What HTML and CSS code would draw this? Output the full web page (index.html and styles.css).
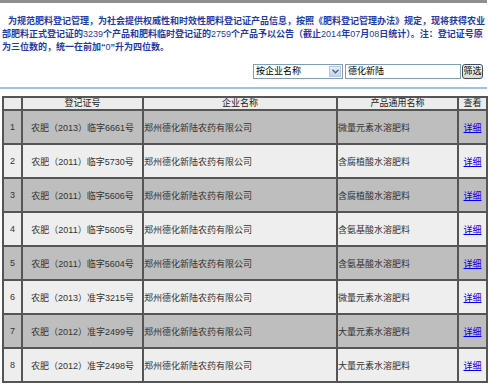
FILE: index.html
```html
<!DOCTYPE html>
<html lang="zh-CN">
<head>
<meta charset="utf-8">
<title>肥料登记证查询</title>
<link rel="stylesheet" href="styles.css">
</head>
<body>
<div class="page">
  <div class="topbar"></div>
  <p class="notice"><span class="l1">为规范肥料登记管理，为社会提供权威性和时效性肥料登记证产品信息，按照《肥料登记管理办法》规定，现将获得农业</span><br>部肥料正式登记证的<span class="num">3239</span>个产品和肥料临时登记证的<span class="num">2759</span>个产品予以公告（截止<span class="num">2014</span>年<span class="num">07</span>月<span class="num">08</span>日统计）。注：登记证号原<br>为三位数的，统一在前加“<span class="num">0</span>”升为四位数。</p>
  <div class="filter">
    <div class="select"><span class="select-text">按企业名称</span><span class="select-btn"><svg width="7" height="5" viewBox="0 0 7 5"><path d="M0.5 0.8 L3.5 3.8 L6.5 0.8" fill="none" stroke="#4d6185" stroke-width="1.4"/></svg></span></div>
    <div class="input">德化新陆</div>
    <div class="btn">筛选</div>
  </div>
  <div class="divider"></div>
  <table class="list">
    <colgroup><col class="c1"><col class="c2"><col class="c3"><col class="c4"><col class="c5"></colgroup>
    <thead>
      <tr><th></th><th>登记证号</th><th>企业名称</th><th>产品通用名称</th><th>查看</th></tr>
    </thead>
    <tbody>
      <tr class="odd"><td class="n">1</td><td class="cert">农肥（2013）临字6661号</td><td class="l">郑州德化新陆农药有限公司</td><td class="l">微量元素水溶肥料</td><td class="v"><a href="#">详细</a></td></tr>
      <tr class="even"><td class="n">2</td><td class="cert">农肥（2011）临字5730号</td><td class="l">郑州德化新陆农药有限公司</td><td class="l">含腐植酸水溶肥料</td><td class="v"><a href="#">详细</a></td></tr>
      <tr class="odd"><td class="n">3</td><td class="cert">农肥（2011）临字5606号</td><td class="l">郑州德化新陆农药有限公司</td><td class="l">含腐植酸水溶肥料</td><td class="v"><a href="#">详细</a></td></tr>
      <tr class="even"><td class="n">4</td><td class="cert">农肥（2011）临字5605号</td><td class="l">郑州德化新陆农药有限公司</td><td class="l">含氨基酸水溶肥料</td><td class="v"><a href="#">详细</a></td></tr>
      <tr class="odd"><td class="n">5</td><td class="cert">农肥（2011）临字5604号</td><td class="l">郑州德化新陆农药有限公司</td><td class="l">含氨基酸水溶肥料</td><td class="v"><a href="#">详细</a></td></tr>
      <tr class="even"><td class="n">6</td><td class="cert">农肥（2013）准字3215号</td><td class="l">郑州德化新陆农药有限公司</td><td class="l">微量元素水溶肥料</td><td class="v"><a href="#">详细</a></td></tr>
      <tr class="odd"><td class="n">7</td><td class="cert">农肥（2012）准字2499号</td><td class="l">郑州德化新陆农药有限公司</td><td class="l">大量元素水溶肥料</td><td class="v"><a href="#">详细</a></td></tr>
      <tr class="even"><td class="n">8</td><td class="cert">农肥（2012）准字2498号</td><td class="l">郑州德化新陆农药有限公司</td><td class="l">大量元素水溶肥料</td><td class="v"><a href="#">详细</a></td></tr>
    </tbody>
  </table>
</div>
</body>
</html>
```
FILE: styles.css
```css
html, body {
  margin: 0;
  padding: 0;
  background: #ffffff;
}
body {
  font-family: "Liberation Sans", "Noto Sans CJK SC", sans-serif;
  font-size: 9px;
  color: #333333;
}
.page {
  width: 487px;
}
.topbar {
  height: 3px;
  background: #8f8f8f;
}
.notice {
  margin: 12px 0 0 0;
  padding-left: 2px;
  line-height: 13px;
  white-space: nowrap;
  color: #1f3aa8;
  font-weight: bold;
}
.notice .l1 {
  padding-left: 6px;
}
.notice .num {
  font-weight: normal;
}
.filter {
  margin-top: 10px;
  height: 15px;
  display: flex;
  justify-content: flex-end;
  padding-right: 4px;
  gap: 1px;
}
.select {
  width: 88px;
  height: 13px;
  border: 1px solid #7f9db9;
  background: #fff;
  display: flex;
  align-items: center;
  margin-right: 1px;
}
.select-text {
  flex: 1;
  padding-left: 2px;
  color: #000;
  line-height: 13px;
}
.select-btn {
  width: 12px;
  height: 11px;
  margin-right: 1px;
  background: linear-gradient(#e6eefc, #c3d3f5);
  border: 1px solid #b7c8ee;
  box-sizing: border-box;
  display: flex;
  align-items: center;
  justify-content: center;
}
.input {
  width: 112px;
  height: 13px;
  border: 1px solid #7f9db9;
  background: #fff;
  color: #000;
  line-height: 13px;
  padding-left: 2px;
}
.btn {
  width: 19px;
  height: 13px;
  border: 1px solid #3b4b68;
  border-radius: 3px;
  background: linear-gradient(#f7f7f4, #dcdcd6);
  color: #000;
  line-height: 13px;
  text-align: center;
}
.divider {
  margin-top: 8px;
  height: 2px;
  background: #9fc3db;
}
.list {
  margin: 7px 0 0 2px;
  border-collapse: collapse;
  table-layout: fixed;
  width: 484px;
  border: 2px solid #555555;
}
.list col.c1 { width: 19px; }
.list col.c2 { width: 121px; }
.list col.c3 { width: 194px; }
.list col.c4 { width: 121px; }
.list col.c5 { width: 29px; }
.list th, .list td {
  border: 2px solid #555555;
  padding: 0;
  white-space: nowrap;
  overflow: hidden;
}
.list th {
  height: 11px;
  line-height: 11px;
  background: #ececec;
  font-weight: normal;
  color: #222;
  text-align: center;
}
.list td {
  height: 32px;
  color: #333;
}
.list tr.odd td { background: #bebebe; }
.list tr.even td { background: #eeeeee; }
.list td.n, .list td.cert, .list td.v { text-align: center; }
.list td.l { text-align: left; }
.list td.v a {
  color: #0000ee;
  text-decoration: underline;
}
```
